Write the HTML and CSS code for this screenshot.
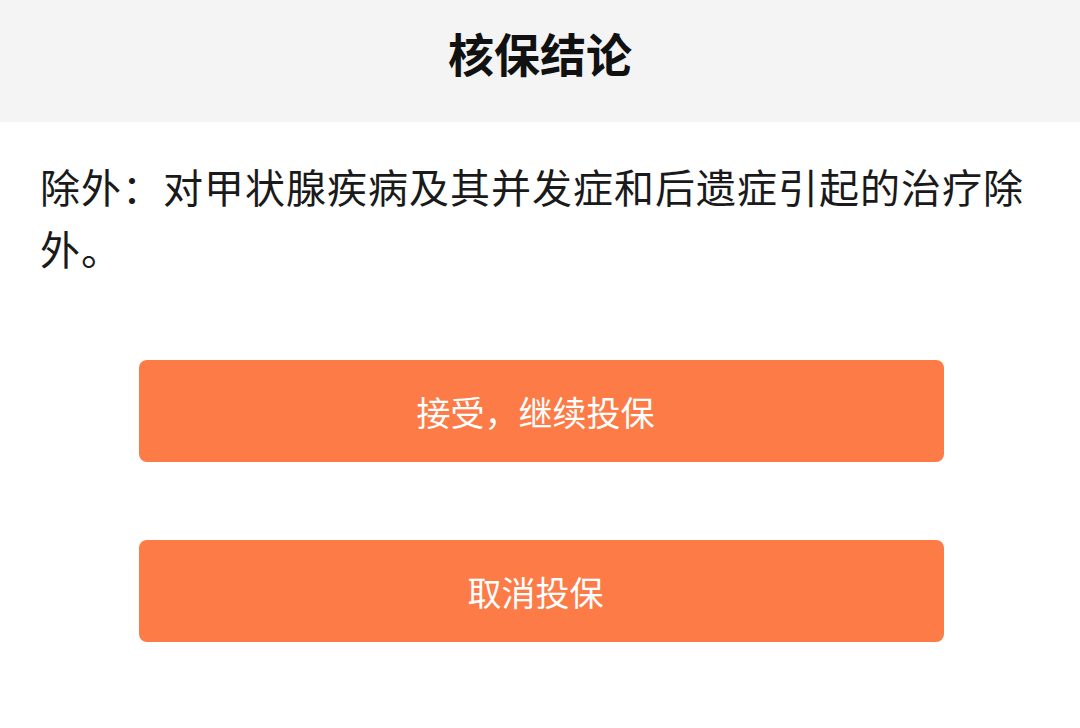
FILE: index.html
```html
<!DOCTYPE html>
<html lang="zh-CN">

<head>
    <meta charset="UTF-8" />
    <meta name="viewport" content="width=device-width, initial-scale=1.0" />
    <title>核保结论</title>
    <link rel="stylesheet" href="styles.css">
</head>

<body id="html-body">

    <header id="page-header">
        <h2 id="header-h2">核保结论</h2>
    </header>

    <main id="body-main">
        <p class="pElement">除外：对甲状腺疾病及其并发症和后遗症引起的治疗除外。</p>

        <div id="bttn-list">
            <button type="button" class="actBttn">接受，继续投保</button>
            <button type="button" class="actBttn">取消投保</button>
        </div>
    </main>

</body>

</html>
```

FILE: styles.css
```css
#html-body {
    margin: 0;
    background-color: rgb(255, 255, 255);
    font-family: "Noto Sans CJK SC", "Noto Sans", sans-serif;
    color: rgb(0, 0, 0);
}

#page-header {
    height: 122px;
    display: flex;
    align-items: center;
    justify-content: center;
    background-color: rgb(244, 244, 244);
}

#header-h2 {
    margin: 0 0 18px 0;
    font-size: 46px;
    font-weight: 700;
    color: rgb(17, 17, 17);
}

#body-main {
    padding: 0 40px;
}

.pElement {
    margin: 33px 0 0 0;
    font-size: 40px;
    letter-spacing: 1px;
    line-height: 62px;
    color: rgb(26, 26, 26);
}

#bttn-list {
    display: flex;
    flex-direction: column;
    gap: 78px;
    margin: 81px 96px 0 99px;
}

.actBttn {
    height: 102px;
    border: 0;
    border-radius: 8px;
    padding: 0 12px 0 0;
    background-color: rgb(252, 123, 71);
    color: rgb(255, 255, 255);
    font-family: "Noto Sans CJK SC", "Noto Sans", sans-serif;
    font-size: 34px;
}
```
